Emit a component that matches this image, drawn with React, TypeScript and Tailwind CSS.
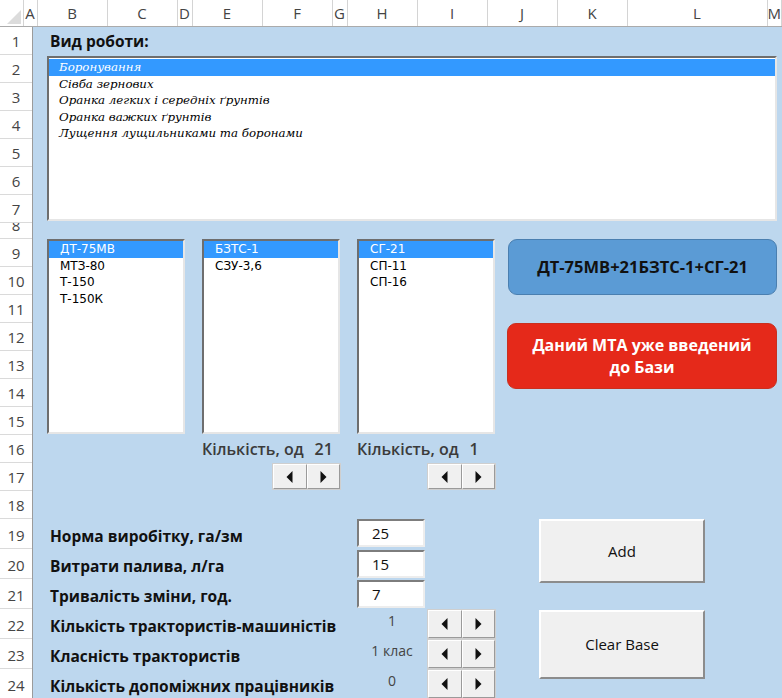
import React from 'react';

const ui = "font-['Open_Sans',sans-serif]";

const columns: { name: string; w: string }[] = [
  { name: 'A', w: 'w-[14px]' },
  { name: 'B', w: 'w-[70px]' },
  { name: 'C', w: 'w-[70px]' },
  { name: 'D', w: 'w-[15px]' },
  { name: 'E', w: 'w-[70px]' },
  { name: 'F', w: 'w-[70px]' },
  { name: 'G', w: 'w-[15px]' },
  { name: 'H', w: 'w-[70px]' },
  { name: 'I', w: 'w-[70px]' },
  { name: 'J', w: 'w-[70px]' },
  { name: 'K', w: 'w-[70px]' },
  { name: 'L', w: 'w-[140px]' },
  { name: 'M', w: 'flex-1' },
];

// row heights of the sheet: 1-7 normal, 8 squeezed, 9-18 normal, 19-24 taller
const rowHeight = (n: number) => {
  if (n === 8) return 'h-[16px]';
  if (n >= 19) return 'h-[30px]';
  return 'h-[28px]';
};

const workTypes = [
  'Боронування',
  'Сівба зернових',
  'Оранка легких і середніх ґрунтів',
  'Оранка важких ґрунтів',
  'Лущення лущильниками та боронами',
];

const tractors = ['ДТ-75МВ', 'МТЗ-80', 'Т-150', 'Т-150К'];
const implementsList = ['БЗТС-1', 'СЗУ-3,6'];
const hitches = ['СГ-21', 'СП-11', 'СП-16'];

const ArrowLeft = () => (
  <svg width="7" height="12" viewBox="0 0 7 12">
    <polygon points="6.5,0 6.5,12 0.5,6" fill="#111" />
  </svg>
);

const ArrowRight = () => (
  <svg width="7" height="12" viewBox="0 0 7 12">
    <polygon points="0.5,0 0.5,12 6.5,6" fill="#111" />
  </svg>
);

const SpinButton: React.FC<{ children: React.ReactNode }> = ({ children }) => (
  <div className="flex-1 flex items-center justify-center bg-[#f0f0f0] border border-t-white border-l-white border-r-[#9a9a9a] border-b-[#9a9a9a]">
    {children}
  </div>
);

const Spinner: React.FC<{ className?: string }> = ({ className = '' }) => (
  <div className={`flex w-[69px] border border-[#cfcfcf] ${className}`}>
    <SpinButton>
      <ArrowLeft />
    </SpinButton>
    <SpinButton>
      <ArrowRight />
    </SpinButton>
  </div>
);

const ListBox: React.FC<{ items: string[]; className?: string; itemClass?: string }> = ({
  items,
  className = '',
  itemClass = '',
}) => (
  <div
    className={`bg-white border-2 border-t-[#6e6e6e] border-l-[#6e6e6e] border-r-[#e6e6e6] border-b-[#e6e6e6] overflow-hidden ${className}`}
  >
    {items.map((item, i) => (
      <div
        key={item}
        className={`h-[16.6px] leading-[16.6px] whitespace-nowrap ${itemClass} ${
          i === 0 ? 'bg-[#3399ff] text-white' : 'text-black'
        }`}
      >
        {item}
      </div>
    ))}
  </div>
);

const FormButton: React.FC<{ label: string; className?: string }> = ({ label, className = '' }) => (
  <div
    className={`flex items-center justify-center bg-[#f0f0f0] border-2 border-t-white border-l-white border-r-[#8c8c8c] border-b-[#8c8c8c] text-[15px] text-[#111] ${className}`}
  >
    {label}
  </div>
);

const InputBox: React.FC<{ value: string; className?: string }> = ({ value, className = '' }) => (
  <div
    className={`w-[68px] h-[28px] bg-white border-2 border-t-[#7d7d7d] border-l-[#7d7d7d] border-r-[#ededed] border-b-[#ededed] pl-[13px] flex items-center text-[15px] text-[#111] ${className}`}
  >
    {value}
  </div>
);

const QtyLabel: React.FC<{ count: string; className?: string }> = ({ count, className = '' }) => (
  <div className={`flex items-center gap-[11px] text-[16px] font-semibold text-[#3b3b3b] whitespace-nowrap ${className}`}>
    <span>Кількість, од</span>
    <span>{count}</span>
  </div>
);

const params = [
  { row: 'row-[19/20]', label: 'Норма виробітку, га/зм' },
  { row: 'row-[20/21]', label: 'Витрати палива, л/га' },
  { row: 'row-[21/22]', label: 'Тривалість зміни, год.' },
  { row: 'row-[22/23]', label: 'Кількість трактористів-машиністів' },
  { row: 'row-[23/24]', label: 'Класність трактористів' },
  { row: 'row-[24/25]', label: 'Кількість допоміжних працівників' },
];

export default function App() {
  return (
    <div className={`w-[782px] h-[698px] overflow-hidden bg-white ${ui}`}>
      {/* column letters */}
      <div className="flex h-[27px] border-b border-[#ababab]">
        <div className="w-[33px] relative border-r border-[#d4d4d4]">
          <svg className="absolute right-[2px] bottom-[2px]" width="14" height="14" viewBox="0 0 14 14">
            <polygon points="14,0 14,14 0,14" fill="#dcdcdc" />
          </svg>
        </div>
        {columns.map((c) => (
          <div
            key={c.name}
            className={`${c.w} shrink-0 flex items-center justify-center border-r border-[#d4d4d4] text-[15px] text-[#444]`}
          >
            {c.name}
          </div>
        ))}
      </div>

      <div className="flex">
        {/* row numbers */}
        <div className="w-[33px] shrink-0 flex flex-col border-r border-[#9b9b9b]">
          {Array.from({ length: 24 }, (_, i) => i + 1).map((n) => (
            <div
              key={n}
              className={`${rowHeight(n)} shrink-0 overflow-hidden flex items-end justify-center pb-[3px] border-b border-[#dadada] text-[15px] leading-5 text-[#444]`}
            >
              {n}
            </div>
          ))}
        </div>

        {/* sheet body */}
        <div className="flex-1 grid bg-[#bdd7ee] grid-cols-[14px_70px_70px_15px_70px_70px_15px_70px_70px_70px_70px_140px_1fr] grid-rows-[repeat(7,28px)_16px_repeat(10,28px)_repeat(6,30px)]">
          <div className="col-[2/12] row-[1/2] flex items-end pb-[2px] pl-[3px] text-[15.5px] font-bold text-[#111]">
            Вид роботи:
          </div>

          <ListBox
            items={workTypes}
            className="col-[2/13] row-[2/8] mt-px mb-[2px] pt-[1px]"
            itemClass="pl-[10px] italic text-[11.8px] font-['DejaVu_Serif',serif]"
          />

          <ListBox
            items={tractors}
            className="col-[2/4] row-[9/16] mr-[2px] mb-px"
            itemClass="pl-[11px] text-[12px] font-['DejaVu_Sans',sans-serif]"
          />
          <ListBox
            items={implementsList}
            className="col-[5/7] row-[9/16] mr-[2px] mb-px"
            itemClass="pl-[11px] text-[12px] font-['DejaVu_Sans',sans-serif]"
          />
          <ListBox
            items={hitches}
            className="col-[8/10] row-[9/16] mr-[2px] mb-px"
            itemClass="pl-[11px] text-[12px] font-['DejaVu_Sans',sans-serif]"
          />

          <div className="col-[10/13] row-[9/11] ml-[11px] flex items-center justify-center rounded-[9px] bg-[#5b9bd5] border border-[#4a7fb0] text-[16.5px] font-bold text-[#111]">
            ДТ-75МВ+21БЗТС-1+СГ-21
          </div>

          <div className="col-[10/13] row-[12/15] ml-[10px] h-[66px] self-start flex items-center justify-center text-center rounded-[9px] bg-[#e5291a] border border-[#c9301f] text-[16px] leading-[22px] font-bold text-white">
            Даний МТА уже введений
            <br />
            до Бази
          </div>

          <QtyLabel count="21" className="col-[5/8] row-[16/17]" />
          <QtyLabel count="1" className="col-[8/11] row-[16/17]" />

          <Spinner className="col-[6/7] row-[17/18] h-[27px] self-start" />
          <Spinner className="col-[9/10] row-[17/18] h-[27px] self-start" />

          {params.map((p) => (
            <div
              key={p.label}
              className={`col-[2/8] ${p.row} flex items-end pb-[1px] pl-[3px] text-[15.5px] font-bold text-[#111] whitespace-nowrap`}
            >
              {p.label}
            </div>
          ))}

          <InputBox value="25" className="col-[8/9] row-[19/20] self-start" />
          <InputBox value="15" className="col-[8/9] row-[20/21] self-start mt-px" />
          <InputBox value="7" className="col-[8/9] row-[21/22] self-start mt-px" />

          <div className="col-[8/9] row-[22/23] flex justify-center pt-[1px] text-[14px] text-[#444]">1</div>
          <div className="col-[8/9] row-[23/24] flex justify-center pt-[1px] text-[14px] text-[#444]">1 клас</div>
          <div className="col-[8/9] row-[24/25] flex justify-center pt-[1px] text-[14px] text-[#444]">0</div>

          <Spinner className="col-[9/10] row-[22/23] h-[30px]" />
          <Spinner className="col-[9/10] row-[23/24] h-[30px]" />
          <Spinner className="col-[9/10] row-[24/25] h-[30px]" />

          <FormButton label="Add" className="col-[10/13] row-[19/22] ml-[42px] w-[166px] h-[64px] self-start" />
          <FormButton label="Clear Base" className="col-[10/13] row-[22/25] ml-[42px] w-[166px] h-[69px] mt-px self-start" />
        </div>
      </div>
    </div>
  );
}
